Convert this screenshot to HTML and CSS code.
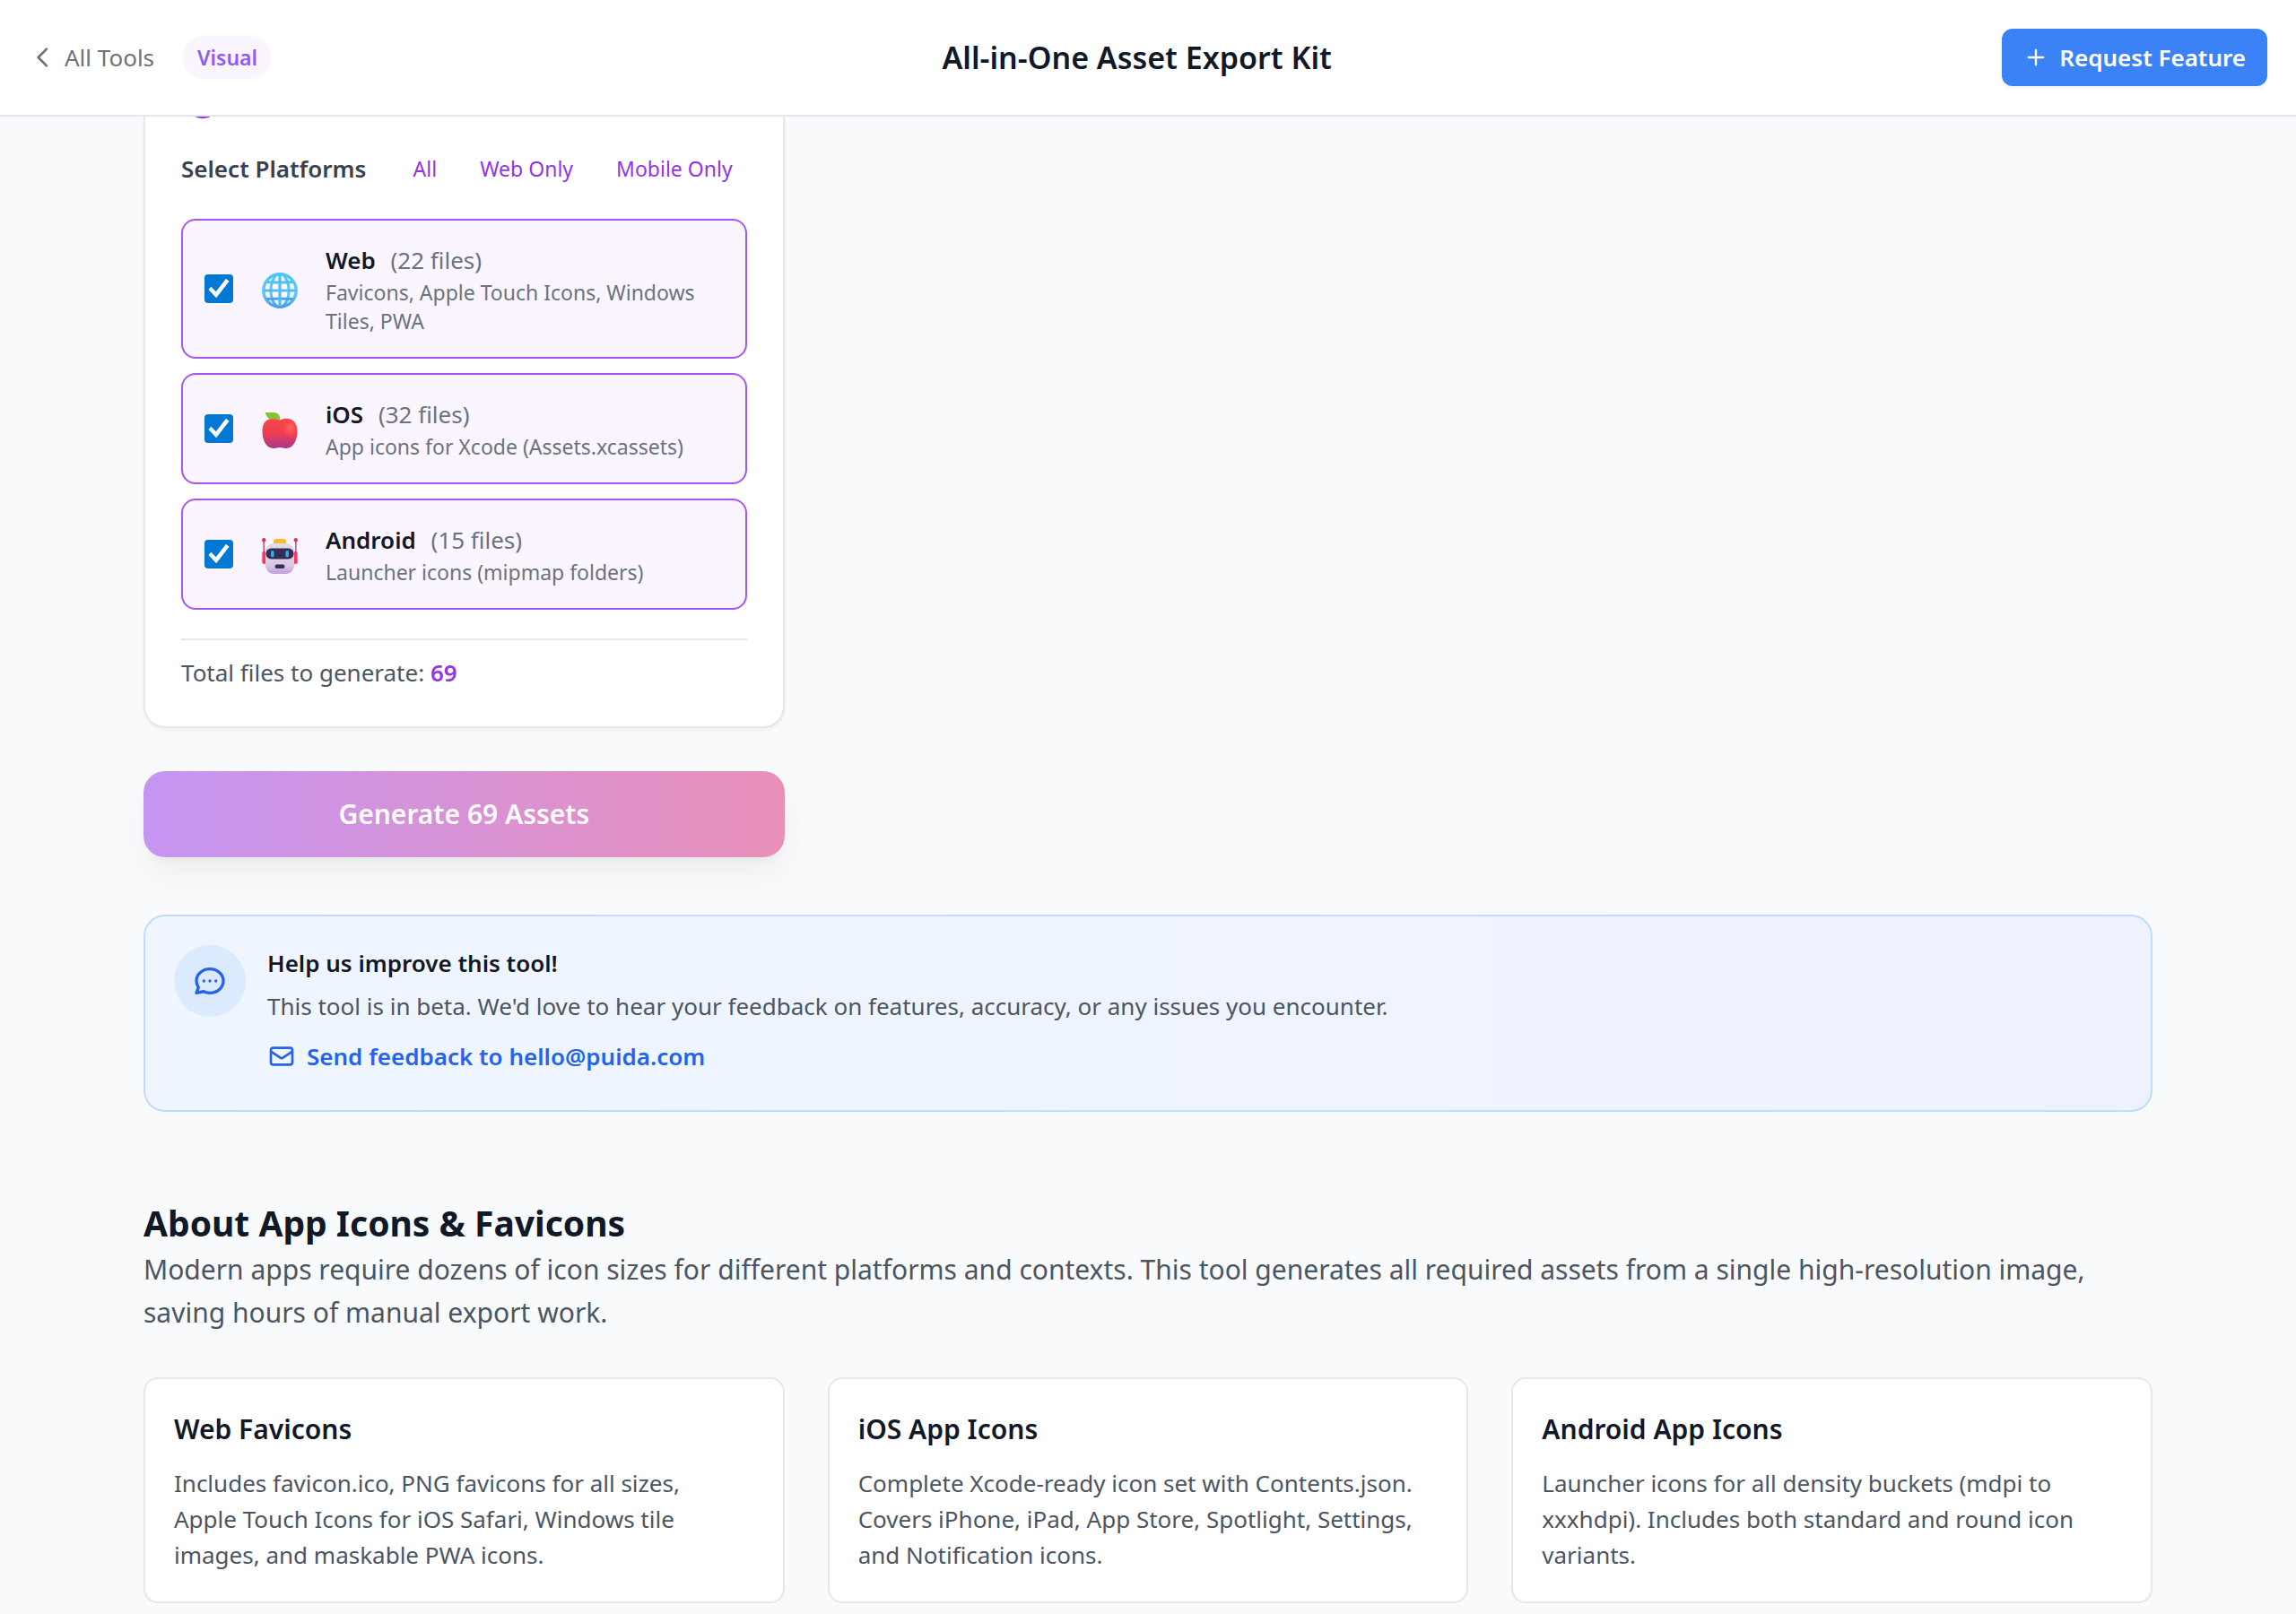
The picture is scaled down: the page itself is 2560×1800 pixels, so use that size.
FILE: index.html
```html
<!DOCTYPE html>
<html lang="en">
<head>
  <meta charset="UTF-8" />
  <meta name="viewport" content="width=device-width, initial-scale=1.0"/>
  <title>All-in-One Asset Export Kit</title>
  <link rel="stylesheet" href="styles.css">
</head>
<body>
  <header class="topbar">
    <div class="topbar-left">
      <a class="back-link" href="#">
        <svg class="icon" viewBox="0 0 24 24"><path d="M15 19l-7-7 7-7"/></svg>
        All Tools
      </a>
      <span class="badge">Visual</span>
    </div>
    <h1>All-in-One Asset Export Kit</h1>
    <button type="button" class="request-btn">
      <svg class="icon" viewBox="0 0 24 24"><path d="M12 5v14M5 12h14"/></svg>
      Request Feature
    </button>
  </header>

  <main class="container">
    <div class="tool-column">
      <section class="panel">
        <div class="color-row"><span class="color-dot"></span></div>

        <div class="platform-head">
          <h2>Select Platforms</h2>
          <div class="quick-select">
            <button type="button">All</button>
            <button type="button">Web Only</button>
            <button type="button">Mobile Only</button>
          </div>
        </div>

        <div class="platform-list">
          <label class="platform" for="web">
            <input type="checkbox" id="web" checked />
            <span class="platform-icon">
              <svg viewBox="0 0 40 40">
                <defs>
                  <linearGradient id="globeFill" x1="0" y1="0" x2="0" y2="1">
                    <stop offset="0" stop-color="#4fc3f7"/>
                    <stop offset="0.6" stop-color="#5cc8ff"/>
                    <stop offset="1" stop-color="#4a9fe8"/>
                  </linearGradient>
                </defs>
                <circle cx="20" cy="20" r="18.5" fill="#faf8ff"/>
                <g fill="none" stroke="url(#globeFill)" stroke-width="3">
                  <circle cx="20" cy="20" r="18.2" stroke-width="3.4"/>
                  <ellipse cx="20" cy="20" rx="10" ry="18.4"/>
                  <path d="M5 10.5Q20 11.5 35 10.5M5 29.5Q20 28.5 35 29.5"/>
                </g>
                <path d="M20 2v36M2 20h36" fill="none" stroke="#52bdf5" stroke-width="3.2"/>
              </svg>
            </span>
            <span class="platform-text">
              <span class="platform-name"><strong>Web</strong> <span>(22 files)</span></span>
              <span class="platform-desc">Favicons, Apple Touch Icons, Windows Tiles, PWA</span>
            </span>
          </label>

          <label class="platform" for="ios">
            <input type="checkbox" id="ios" checked />
            <span class="platform-icon">
              <svg viewBox="0 0 40 40">
                <defs>
                  <linearGradient id="appleFill" x1="0" y1="0" x2="0" y2="1">
                    <stop offset="0" stop-color="#f8464c"/>
                    <stop offset="0.5" stop-color="#ee3d51"/>
                    <stop offset="1" stop-color="#a8378f"/>
                  </linearGradient>
                  <radialGradient id="appleShine" cx="0.7" cy="0.35" r="0.4">
                    <stop offset="0" stop-color="#ff6a68"/>
                    <stop offset="1" stop-color="#ff4a4a" stop-opacity="0"/>
                  </radialGradient>
                </defs>
                <path d="M20 8.500C16 6.500 12 6 8 7.500C2.500 9.500 0.500 15 0.500 21C0.500 31 5 40 13 40C16 40 18 39 20 39C22 39 24 40 27 40C35 40 39.500 31 39.500 21C39.500 15 37 9.500 32 7.500C28 6 24 6.500 20 8.500Z" fill="url(#appleFill)"/>
                <path d="M20 8.500C24 6.500 28 6 32 7.500C37 9.500 39.500 15 39.500 21C39.500 27 37 33 33 37L14 30Z" fill="url(#appleShine)"/>
                <path d="M3.500 0H13C18 0 20.500 3.500 20.500 8.500C16 6.500 14.500 7.500 11 7.500C7 7.500 5 4 3.500 0Z" fill="#86c232"/>
              </svg>
            </span>
            <span class="platform-text">
              <span class="platform-name"><strong>iOS</strong> <span>(32 files)</span></span>
              <span class="platform-desc">App icons for Xcode (Assets.xcassets)</span>
            </span>
          </label>

          <label class="platform" for="android">
            <input type="checkbox" id="android" checked />
            <span class="platform-icon">
              <svg viewBox="0 0 40 40">
                <defs>
                  <linearGradient id="robotHead" x1="0" y1="0" x2="0" y2="1">
                    <stop offset="0" stop-color="#e3dbe8"/>
                    <stop offset="0.7" stop-color="#d8cce4"/>
                    <stop offset="1" stop-color="#c49be0"/>
                  </linearGradient>
                </defs>
                <path d="M2.200 3v15M37.800 3v15" stroke="#e84a78" stroke-width="1.600"/>
                <circle cx="2.200" cy="2.200" r="2.200" fill="#e0305c"/>
                <circle cx="37.800" cy="2.200" r="2.200" fill="#e0305c"/>
                <rect x="0.300" y="15" width="5" height="14" rx="2.200" fill="#fb3765"/>
                <rect x="34.700" y="15" width="5" height="14" rx="2.200" fill="#fb3765"/>
                <rect x="13" y="1" width="14" height="7" rx="2.500" fill="#fdbb2d"/>
                <rect x="4" y="6" width="32" height="34" rx="9" fill="url(#robotHead)"/>
                <rect x="4.500" y="11.500" width="31" height="12" rx="6" fill="#372c52"/>
                <rect x="10" y="14" width="3.600" height="7.500" rx="1.800" fill="#2eaaf0"/>
                <rect x="26.400" y="14" width="3.600" height="7.500" rx="1.800" fill="#2eaaf0"/>
                <rect x="14.500" y="29.500" width="11" height="4.500" rx="2.200" fill="#372c52"/>
              </svg>
            </span>
            <span class="platform-text">
              <span class="platform-name"><strong>Android</strong> <span>(15 files)</span></span>
              <span class="platform-desc">Launcher icons (mipmap folders)</span>
            </span>
          </label>
        </div>

        <p class="total">Total files to generate: <strong>69</strong></p>
      </section>

      <button type="button" class="generate-btn" disabled>Generate 69 Assets</button>
    </div>

    <section class="feedback">
      <div class="feedback-icon">
        <svg class="icon" viewBox="0 0 24 24"><path d="M8 12h.01M12 12h.01M16 12h.01M21 12c0 4.418-4.030 8-9 8a9.863 9.863 0 0 1-4.255-.949L3 20l1.395-3.720C3.512 15.042 3 13.574 3 12c0-4.418 4.030-8 9-8s9 3.582 9 8z"/></svg>
      </div>
      <div class="feedback-body">
        <h3>Help us improve this tool!</h3>
        <p>This tool is in beta. We'd love to hear your feedback on features, accuracy, or any issues you encounter.</p>
        <a href="mailto:hello@puida.com">
          <svg class="icon" viewBox="0 0 24 24"><path d="M3 8l7.890 5.260a2 2 0 0 0 2.220 0L21 8M5 19h14a2 2 0 0 0 2-2V7a2 2 0 0 0-2-2H5a2 2 0 0 0-2 2v10a2 2 0 0 0 2 2z"/></svg>
          Send feedback to hello@puida.com
        </a>
      </div>
    </section>

    <section class="about">
      <h2>About App Icons &amp; Favicons</h2>
      <p class="about-intro">Modern apps require dozens of icon sizes for different platforms and contexts. This tool generates all required assets from a single high-resolution image, saving hours of manual export work.</p>
      <div class="cards">
        <article class="card">
          <h3>Web Favicons</h3>
          <p>Includes favicon.ico, PNG favicons for all sizes, Apple Touch Icons for iOS Safari, Windows tile images, and maskable PWA icons.</p>
        </article>
        <article class="card">
          <h3>iOS App Icons</h3>
          <p>Complete Xcode-ready icon set with Contents.json. Covers iPhone, iPad, App Store, Spotlight, Settings, and Notification icons.</p>
        </article>
        <article class="card">
          <h3>Android App Icons</h3>
          <p>Launcher icons for all density buckets (mdpi to xxxhdpi). Includes both standard and round icon variants.</p>
        </article>
      </div>
    </section>
  </main>
</body>
</html>
```
FILE: styles.css
```css
* {
  box-sizing: border-box;
}
body {
  font-family: "Noto Sans", "Open Sans", sans-serif;
  font-size: 26px;
  line-height: 40px;
  background-color: #f9fafc;
  color: #4b5563;
  margin: 0;
}
h1, h2, h3, p {
  margin: 0;
}
button {
  font-family: inherit;
  border: none;
  cursor: pointer;
}
a {
  text-decoration: none;
}
.icon {
  fill: none;
  stroke: currentColor;
  stroke-width: 2;
  stroke-linecap: round;
  stroke-linejoin: round;
  flex-shrink: 0;
}

/* top bar */
.topbar {
  display: flex;
  align-items: center;
  justify-content: space-between;
  padding: 32px;
  background: white;
  border-bottom: 2px solid #e5e7eb;
}
.topbar h1 {
  font-size: 34px;
  font-weight: 600;
  color: #111827;
}
.topbar-left {
  display: flex;
  align-items: center;
  gap: 32px;
}
.back-link {
  display: flex;
  align-items: center;
  gap: 8px;
  color: #6b7280;
}
.back-link .icon {
  width: 32px;
  height: 32px;
}
.badge {
  padding: 8px 16px;
  border-radius: 24px;
  background: #faf5ff;
  color: #8b5cf6;
  font-size: 23px;
  font-weight: 600;
  line-height: 32px;
}
.request-btn {
  display: flex;
  align-items: center;
  gap: 12px;
  padding: 12px 24px;
  border-radius: 12px;
  background: #3b82f6;
  color: white;
  font-size: 26px;
  font-weight: 600;
  line-height: 40px;
  box-shadow: 0 2px 4px rgba(0,0,0,0.05);
}
.request-btn .icon {
  width: 28px;
  height: 28px;
}

.container {
  max-width: 2240px;
  margin: 0 auto;
}
.tool-column {
  width: calc((100% - 96px) / 3);
}

/* platform picker */
.panel {
  padding: 0 40px 40px;
  background: white;
  border: 2px solid #e5e7eb;
  border-top: none;
  border-radius: 0 0 24px 24px;
  box-shadow: 0 2px 4px rgba(0,0,0,0.05);
}
.color-row {
  display: flex;
  align-items: flex-end;
  height: 2px;
  margin-bottom: 32px;
  padding-left: 4px;
  overflow: hidden;
}
.color-dot {
  flex-shrink: 0;
  width: 40px;
  height: 40px;
  border-radius: 50%;
  background: #9333ea;
}
.platform-head {
  display: flex;
  align-items: center;
  justify-content: space-between;
  margin-bottom: 32px;
}
.platform-head h2 {
  font-size: 26px;
  font-weight: 600;
  color: #374151;
}
.quick-select {
  display: flex;
  gap: 16px;
}
.quick-select button {
  padding: 8px 16px;
  background: none;
  color: #9333ea;
  font-size: 23px;
  line-height: 32px;
}
.platform-list {
  display: flex;
  flex-direction: column;
  gap: 16px;
}
.platform {
  display: flex;
  align-items: center;
  gap: 24px;
  padding: 24px;
  border: 2px solid #a855f7;
  border-radius: 16px;
  background: #faf5ff;
  cursor: pointer;
}
.platform input {
  appearance: none;
  flex-shrink: 0;
  width: 32px;
  height: 32px;
  margin: 0;
  border-radius: 4px;
  background: #0078d4;
}
.platform input:checked::before {
  content: "";
  display: block;
  width: 32px;
  height: 32px;
  background: white;
  clip-path: polygon(14% 53%, 23% 43%, 40% 60%, 75% 15%, 86% 24%, 41% 82%);
}
.platform-icon {
  display: flex;
  justify-content: center;
  flex-shrink: 0;
  width: 55px;
  padding-top: 4px;
}
.platform-icon svg {
  width: 40px;
  height: 40px;
}
.platform-text {
  flex: 1;
}
.platform-name, .platform-desc {
  display: block;
  color: #6b7280;
}
.platform-name strong {
  margin-right: 10px;
  color: #111827;
  font-weight: 600;
}
.platform-desc {
  font-size: 23px;
  line-height: 32px;
}
.total {
  margin-top: 32px;
  padding-top: 16px;
  border-top: 2px solid #e5e7eb;
}
.total strong {
  color: #9333ea;
  font-weight: 600;
}
.generate-btn {
  display: block;
  width: 100%;
  margin-top: 48px;
  padding: 24px;
  border-radius: 24px;
  background: linear-gradient(to right, #9333ea, #db2777);
  color: white;
  font-size: 30px;
  font-weight: 600;
  line-height: 48px;
  box-shadow: 0 20px 30px -6px rgba(0,0,0,0.1), 0 8px 12px -8px rgba(0,0,0,0.1);
}
.generate-btn:disabled {
  opacity: 0.5;
}

/* feedback banner */
.feedback {
  display: flex;
  gap: 24px;
  margin-top: 64px;
  padding: 32px 32px 40px;
  border: 2px solid #bfdbfe;
  border-radius: 24px;
  background: linear-gradient(to right, #eff6ff, #eef2ff);
}
.feedback-icon {
  display: flex;
  align-items: center;
  justify-content: center;
  flex-shrink: 0;
  width: 80px;
  height: 80px;
  border-radius: 50%;
  background: #dbeafe;
  color: #2563eb;
}
.feedback-icon .icon {
  width: 40px;
  height: 40px;
}
.feedback h3 {
  margin-bottom: 8px;
  font-size: 26px;
  font-weight: 600;
  color: #111827;
}
.feedback p {
  margin-bottom: 16px;
}
.feedback a {
  display: flex;
  align-items: center;
  gap: 12px;
  color: #2563eb;
  font-weight: 600;
}
.feedback a .icon {
  width: 32px;
  height: 32px;
}

/* about */
.about {
  margin-top: 96px;
  padding-bottom: 12px;
}
.about h2 {
  font-size: 39px;
  font-weight: 700;
  line-height: 56px;
  color: #111827;
}
.about-intro {
  margin-bottom: 48px;
  font-size: 30px;
  line-height: 48px;
}
.cards {
  display: grid;
  grid-template-columns: repeat(3, 1fr);
  gap: 48px;
}
.card {
  padding: 32px 40px 32px 32px;
  background: white;
  border: 2px solid #e5e7eb;
  border-radius: 16px;
}
.card h3 {
  margin-bottom: 16px;
  font-size: 30px;
  font-weight: 600;
  line-height: 48px;
  color: #111827;
}
```
